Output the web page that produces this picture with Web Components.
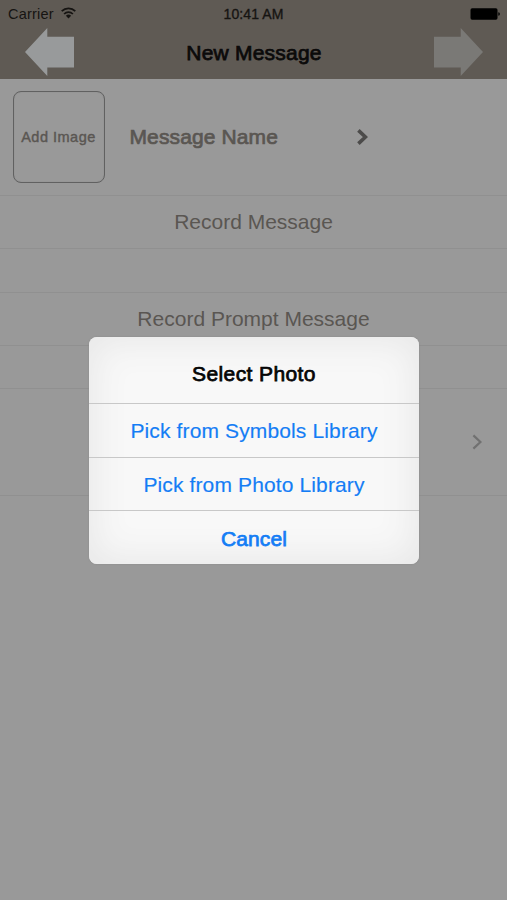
<!DOCTYPE html>
<html lang="en">
<head>
<meta charset="utf-8">
<title>New Message</title>
<style>
html, body { margin: 0; height: 100%; overflow: hidden; background: #999; }
body { font-family: "Liberation Sans", Arial, sans-serif; font-size: 21px; color: #5a5652; }
</style>
</head>
<body>
<message-screen></message-screen>
<script>
function define(name, html) {
  const template = document.createElement('template');
  template.innerHTML = html;
  customElements.define(name, class extends HTMLElement {
    constructor() {
      super();
      this.attachShadow({ mode: 'open' }).append(template.content.cloneNode(true));
    }
  });
}

define('status-bar', `
<style>
  :host { display: grid; grid-template-columns: 1fr auto 1fr; align-items: center; height: 28px; padding: 0 7px 0 8px; box-sizing: border-box; font-size: 14px; line-height: 28px; color: #161412; }
  .carrier { display: flex; align-items: center; gap: 7px; font-size: 14.5px; letter-spacing: .22px; }
  .time { letter-spacing: .1px; margin-right: 1px; -webkit-text-stroke: .35px; }
  .battery { justify-self: end; }
  svg { display: block; }
</style>
<div class="carrier"><span>Carrier</span>
<svg width="15" height="12" viewBox="0 0 15 12" style="margin-top:-3px"><g fill="none" stroke="currentColor" stroke-width="1.7"><path d="M.7 4.2a9.6 9.6 0 0 1 13.6 0"/><path d="M3.1 7a6.2 6.2 0 0 1 8.8 0"/></g><path d="M7.5 11.5 4.9 8.8a3.7 3.7 0 0 1 5.2 0z" fill="currentColor"/></svg></div>
<span class="time">10:41 AM</span>
<svg class="battery" width="30" height="12" viewBox="0 0 30 12" style="margin-top:-1px"><rect x=".5" y=".3" width="27" height="11.4" rx="1.6" fill="#000"/><path d="M28.3 4.2q1.6.3 1.6 1.8t-1.6 1.8z" fill="#000"/></svg>`);

define('arrow-button', `
<style>
  :host { display: block; width: 49px; height: 48px; }
  :host([direction="right"]) svg { transform: scaleX(-1); }
  svg { display: block; }
</style>
<svg width="49" height="48" viewBox="0 0 49 48"><path d="M0 24 22.3 0V8.7H49V39.6H22.3V48z" fill="currentColor"/></svg>`);

define('nav-bar', `
<style>
  :host { display: flex; justify-content: space-between; align-items: center; height: 51px; padding: 0 24px 3px 25px; box-sizing: border-box; }
  .title { line-height: 49px; color: #0b0a0a; letter-spacing: .22px; -webkit-text-stroke: .75px; }
</style>
<slot name="back"></slot><div class="title"><slot></slot></div><slot name="next"></slot>`);

define('form-row', `
<style>
  :host { display: flex; align-items: center; justify-content: center; box-sizing: border-box; height: var(--h); border-bottom: 1px solid #909090; line-height: 24px; }
  :host([start]) { justify-content: flex-start; padding-left: 13px; }
  :host([end]) { justify-content: flex-end; padding-right: 24px; }
</style><slot></slot>`);

define('image-picker', `
<style>
  :host { display: flex; align-items: center; justify-content: center; box-sizing: border-box; width: 92px; height: 92px; border: 1px solid #616161; box-shadow: inset 0 0 1px #777; border-radius: 8px; font-size: 14.5px; letter-spacing: .5px; -webkit-text-stroke: .4px; white-space: nowrap; padding-right: 1px; }
</style><slot></slot>`);

define('chevron-icon', `
<style>
  :host { display: block; }
  svg { display: block; }
  path { fill: none; stroke: currentColor; stroke-width: var(--weight, 2); }
</style>
<svg width="11" height="16" viewBox="0 0 11 16"><path d="M1.4 1.4 8.4 8l-7 6.6"/></svg>`);

define('alert-action', `
<style>
  :host { display: block; box-sizing: border-box; height: 53.7px; border-top: 1px solid #c8c8c8; line-height: 54px; color: #147df5; letter-spacing: .13px; -webkit-text-stroke: .15px; }
  :host([bold]) { -webkit-text-stroke: .75px; line-height: 55px; }
</style><slot></slot>`);

define('alert-dialog', `
<style>
  :host { display: block; box-sizing: border-box; width: 330px; height: 227px; overflow: hidden; border-radius: 8px; text-align: center; background: #f8f8f8; box-shadow: inset 0 0 34px 6px #e8e8e8, 0 0 2px #888; }
  .title { height: 66px; line-height: 74px; color: #050505; letter-spacing: .4px; -webkit-text-stroke: .75px; }
</style>
<div class="title"><slot name="title"></slot></div><slot></slot>`);

define('message-screen', `
<style>
  :host { display: block; position: relative; width: 507px; height: 900px; background: #999; }
  header { height: 79px; background: #5f5a54; }
  .back { color: #989a9b; }
  .next { color: #7a7976; }
  .name { margin-left: 24.5px; width: 227px; letter-spacing: .12px; -webkit-text-stroke: .7px; }
  .name-chevron { --weight: 3.6; color: #4c4b4a; }
  .end-chevron { color: #717171; --weight: 2.2; }
  alert-dialog { position: absolute; left: 89px; top: 337px; }
</style>
<header>
  <status-bar></status-bar>
  <nav-bar><arrow-button class="back" slot="back"></arrow-button>New Message<arrow-button class="next" slot="next" direction="right"></arrow-button></nav-bar>
</header>
<main>
  <form-row start style="--h:117px"><image-picker>Add Image</image-picker><span class="name">Message Name</span><chevron-icon class="name-chevron"></chevron-icon></form-row>
  <form-row style="--h:53px">Record Message</form-row>
  <form-row style="--h:44px"></form-row>
  <form-row style="--h:53px">Record Prompt Message</form-row>
  <form-row style="--h:43px"></form-row>
  <form-row end style="--h:107px"><chevron-icon class="end-chevron"></chevron-icon></form-row>
</main>
<alert-dialog>
  <span slot="title">Select Photo</span>
  <alert-action>Pick from Symbols Library</alert-action>
  <alert-action>Pick from Photo Library</alert-action>
  <alert-action bold>Cancel</alert-action>
</alert-dialog>`);
</script>
</body>
</html>
